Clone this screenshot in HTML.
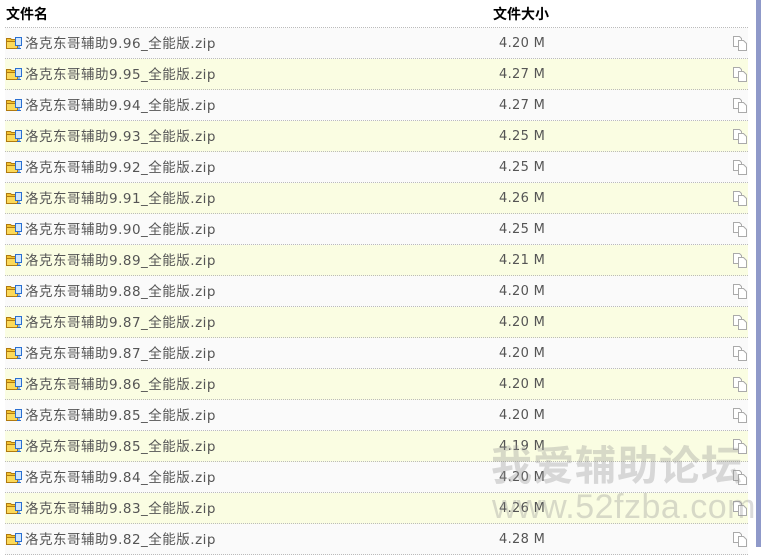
<!DOCTYPE html>
<html><head><meta charset="utf-8"><style>
*{margin:0;padding:0;box-sizing:border-box}
body{width:761px;height:547px;overflow:hidden;background:#fff;font-family:"Liberation Sans","Noto Sans CJK SC",sans-serif;position:relative}
.sb{position:absolute;left:756px;top:0;width:5px;height:547px;background:#8f99c9}
.t{position:absolute;left:5px;top:0;width:743px}
.h{height:28px;border-bottom:1px dotted #bbb;position:relative;font-weight:bold;font-size:14px;color:#000}
.h span{position:absolute;top:4px}
.r{height:31px;border-bottom:1px dotted #bbb;position:relative;font-size:14px;color:#555;background:#fafafa}
.r:nth-child(odd){background:#fafde2}
.r .n{position:absolute;left:20px;top:4px;font-family:"DejaVu Sans","Noto Sans CJK SC",sans-serif;font-size:13.5px;letter-spacing:0.5px}
.r .s{position:absolute;left:494px;top:8px;font-family:"DejaVu Sans",sans-serif;font-size:13px;letter-spacing:0.3px}
.ic{position:absolute;left:1px;top:8px}
.cp{position:absolute;left:727px;top:7px}
.wm{position:absolute;color:rgba(150,150,150,.35);font-weight:bold;white-space:nowrap}
</style></head><body>
<div class="t">
<div class="h"><span style="left:1px">文件名</span><span style="left:488px">文件大小</span></div>
<div id="rows"></div>
</div>
<div class="sb"></div>
<div class="wm" style="left:491px;top:432px;font-size:41px;font-family:'Noto Sans CJK SC',sans-serif;letter-spacing:1px">我爱辅助论坛</div>
<div class="wm" style="left:492px;top:488px;font-size:34px;font-weight:normal;font-family:'Liberation Sans',sans-serif;letter-spacing:0.5px">www.52fzba.com</div>
<script>
var d=[["9.96","4.20"],["9.95","4.27"],["9.94","4.27"],["9.93","4.25"],["9.92","4.25"],["9.91","4.26"],["9.90","4.25"],["9.89","4.21"],["9.88","4.20"],["9.87","4.20"],["9.87","4.20"],["9.86","4.20"],["9.85","4.20"],["9.85","4.19"],["9.84","4.20"],["9.83","4.26"],["9.82","4.28"]];
var ic='<svg class="ic" width="17" height="14" viewBox="0 0 17 14"><path d="M0.5 2.5h4l1 1h6v9h-11z" fill="#f4c430" stroke="#b07a10"/><rect x="0.5" y="5.5" width="11" height="7" fill="#fbd95a" stroke="#b07a10"/><rect x="9.5" y="1.5" width="6" height="8" fill="#cfe6ff" stroke="#2a6fd0"/><path d="M11 12.5h4M13 9.5v3" stroke="#2a6fd0"/></svg>';
var cp='<svg class="cp" width="16" height="16" viewBox="0 0 16 16"><path d="M1.5 1.5h6l2 2v8h-8z" fill="#fff" stroke="#aaa"/><path d="M6.5 5.5h5l3 3v7h-8z" fill="#fff" stroke="#aaa"/></svg>';
var h='';d.forEach(function(x){h+='<div class="r">'+ic+'<span class="n">洛克东哥辅助'+x[0]+'_全能版.zip</span><span class="s">'+x[1]+' M</span>'+cp+'</div>'});
document.getElementById('rows').outerHTML=h;
</script>
</body></html>
